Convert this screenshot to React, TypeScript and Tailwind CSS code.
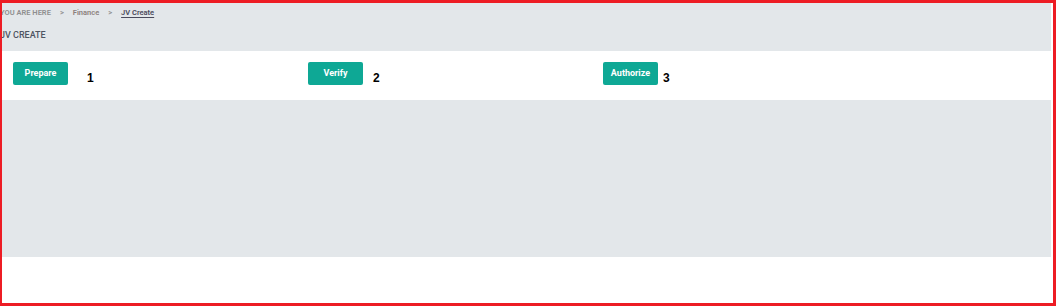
import React from "react";

function Step({ label, n, gap }: { label: string; n: string; gap: string }) {
  return (
    <div className="w-[295px] shrink-0 flex items-start">
      <button className="mt-[11px] h-[23px] w-[55px] rounded-[2px] bg-[#0ea895] text-white text-[9px] font-bold font-['Roboto',sans-serif] flex items-center justify-center">
        {label}
      </button>
      <span className={`${gap} mt-[20px] text-[12px] leading-[14px] font-bold text-black font-['Liberation_Sans',Arial,sans-serif]`}>
        {n}
      </span>
    </div>
  );
}

export default function App() {
  return (
    <div className="w-[1056px] h-[306px] bg-white border-t-[3px] border-l-2 border-r-[3px] border-b-[3px] border-[#ed1c24] overflow-hidden font-['Roboto',sans-serif]">
      <div className="h-[300px] pr-[2px] flex flex-col">
        <div className="h-[48px] bg-[#e3e7ea] overflow-hidden">
          <div className="-ml-[2px] pt-[5px] flex items-center text-[7.5px] font-semibold leading-[10px]">
            <span className="text-[#8f8f8f]">YOU ARE HERE</span>
            <span className="text-[#8f8f8f] mx-[9px]">&gt;</span>
            <span className="text-[#8c7f7c]">Finance</span>
            <span className="text-[#8f8f8f] mx-[9px]">&gt;</span>
            <span className="text-[#4a4a5c] underline underline-offset-[2px]">JV Create</span>
          </div>
          <div className="-ml-[2px] mt-[11px] text-[9px] font-medium leading-[12px] text-[#4e5461]">
            JV CREATE
          </div>
        </div>
        <div className="h-[49px] bg-white flex pl-[11px]">
          <Step label="Prepare" n="1" gap="ml-[19px]" />
          <Step label="Verify" n="2" gap="ml-[10px]" />
          <Step label="Authorize" n="3" gap="ml-[5px]" />
        </div>
        <div className="h-[157px] bg-[#e3e7ea]" />
        <div className="flex-1 bg-white" />
      </div>
    </div>
  );
}
